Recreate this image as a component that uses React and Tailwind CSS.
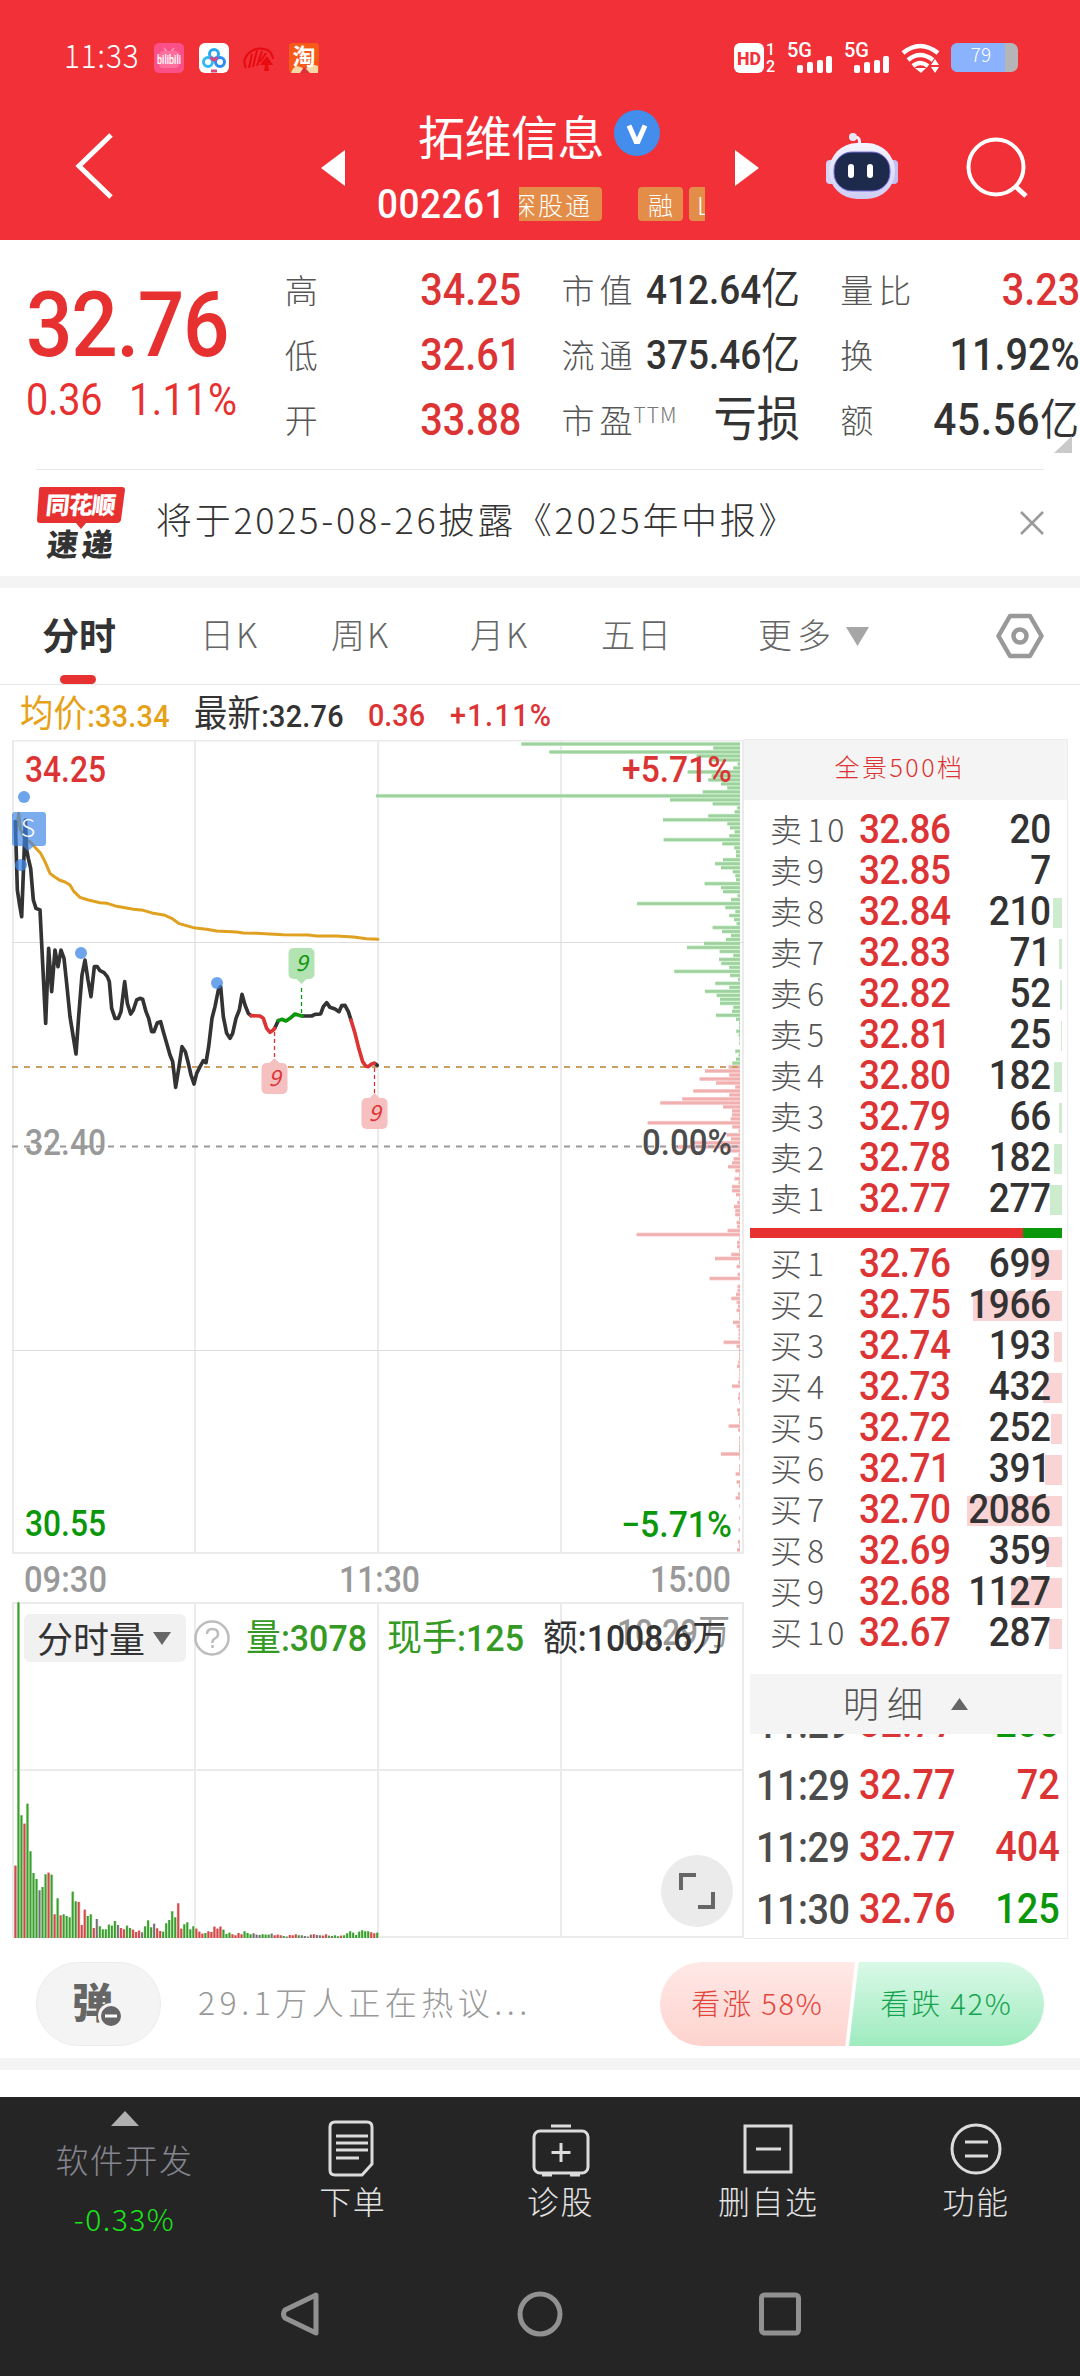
import { Fragment } from 'react'

const asks = [
  ['卖10', '32.86', 20, 0],
  ['卖9', '32.85', 7, 0],
  ['卖8', '32.84', 210, 9],
  ['卖7', '32.83', 71, 3],
  ['卖6', '32.82', 52, 2],
  ['卖5', '32.81', 25, 1],
  ['卖4', '32.80', 182, 8],
  ['卖3', '32.79', 66, 3],
  ['卖2', '32.78', 182, 8],
  ['卖1', '32.77', 277, 12],
]

const bids = [
  ['买1', '32.76', 699, 31],
  ['买2', '32.75', 1966, 89],
  ['买3', '32.74', 193, 8],
  ['买4', '32.73', 432, 19],
  ['买5', '32.72', 252, 11],
  ['买6', '32.71', 391, 17],
  ['买7', '32.70', 2086, 95],
  ['买8', '32.69', 359, 16],
  ['买9', '32.68', 1127, 51],
  ['买10', '32.67', 287, 13],
]

const trades = [
  ['11:29', '32.77', '200', 'text-[#0a970a]'],
  ['11:29', '32.77', '72', 'text-[#dc3434]'],
  ['11:29', '32.77', '404', 'text-[#dc3434]'],
  ['11:30', '32.76', '125', 'text-[#0a970a]'],
]

// Price path segments, three units per pixel
const priceLine = [
  ['#333333', '46,275 52,480 58,520 65,560 70,430 76,270 80,360 85,385 92,415 100,510 108,535 120,540 128,700 137,880 146,655 155,785 165,660 174,710 183,660 192,685 200,760 210,860 228,972 236,860 246,735 255,690 264,750 273,800 283,710 292,710 300,722 312,728 322,740 328,755 335,835 345,865 355,865 363,845 374,755 382,820 392,852 400,840 410,810 420,805 428,808 438,845 446,865 455,905 462,905 472,878 482,875 490,905 500,940 510,975 518,995 527,1072 537,1010 546,950 556,965 565,1000 573,1035 582,1062 590,1030 600,1010 610,992 618,998 626,950 636,865 645,830 655,780 662,770 670,860 680,910 690,925 698,910 708,865 718,840 726,793 735,825 745,850 753,857'],
  ['#333333', '824,895 835,872'],
  ['#333333', '906,858 935,858 945,853 962,852 970,830 980,818 990,832 1005,837 1017,845 1025,827 1035,826 1045,845 1053,870'],
  ['#333333', '1123,1000 1132,1006'],
  ['#dc3434', '753,857 780,858 790,865 800,895 810,907 820,900 824,895'],
  ['#0a970a', '835,872 845,868 858,873 870,865 885,852 895,855 906,858'],
  ['#dc3434', '1053,870 1065,910 1075,950 1088,995 1097,1008 1105,1010 1115,1002 1123,1000'],
]

const averageLine =
  '50,300 56,250 62,300 75,330 90,335 105,352 122,370 135,395 150,430 160,438 178,450 195,456 210,465 222,485 240,502 265,510 300,518 322,520 350,529 400,538 430,541 460,550 495,556 515,565 538,581 580,593 620,598 650,603 710,606 730,609 770,610 850,614 925,615 950,618 1010,618 1060,621 1100,626 1134,628'

// Volume at each price tick, from the top of the chart down
const depthAbove = [
  656, 80, 572, 130, 90, 7, 20, 157, 85, 95, 57, 38, 112, 1092, 210, 82, 8, 16, 95, 231, 38, 30, 16, 32, 229, 53, 17, 12,
  12, 51, 75, 57, 22, 14, 12, 106, 57, 51, 7, 27, 309, 44, 14, 32, 18, 10, 82, 54, 27, 42, 108, 159, 61, 20, 63, 56, 32,
  197, 30, 6, 74, 32, 105, 70, 60, 60, 20, 24, 72, 12, 3, 3, 11, 4, 2, 2, 0, 14, 4, 12, 23,
]
const depthBelow = [
  34, 105, 32, 121, 72, 14, 140, 32, 173, 239, 51, 24, 24, 28, 277, 23, 4, 40, 27, 140, 190, 40, 4, 19, 24, 36, 14, 2, 16,
  4, 24, 24, 12, 2, 8, 18, 14, 14, 3, 10, 8, 37, 310, 2, 9, 9, 3, 26, 75, 3, 10, 0, 7, 91, 0, 7, 7, 12, 26, 10, 6, 10, 3,
  3, 21, 10, 4, 4, 4, 49, 10, 3, 3, 3, 5, 9, 2, 2, 2, 5, 24, 0, 4, 6, 2, 0, 9, 6, 2, 3, 34, 6, 0, 3, 2, 3, 3, 57, 2, 0, 3,
  3, 13, 0, 10, 3, 0, 6, 13, 0, 2, 0, 0, 2, 0, 0, 4, 0, 0, 6, 3, 9,
]

// Minute volume: height and direction (r up, g down, k flat)
const volume =
  '217r 1007g 368g 343r 403g 260g 195g 177g 143k 153g 191g 196r 190g 71r 119g 68r 71g 66g 62g 139g 110g 108r 39r 85r 66g 71g 30r 57k 35g 26g 26g 40g 37g 51g 39k 30r 26r 37g 30g 25r 18r 22r 17k 35g 53g 32g 43k 29r 21r 19g 44g 54g 80g 62g 104r 28r 41g 47g 26g 35g 28r 19r 13r 15g 20r 18r 34r 28r 34r 25g 12g 16g 11r 8r 15r 11r 20g 15g 11g 14k 10k 9k 11g 10g 10g 13k 8r 10r 8r 6g 4k 9r 8r 11r 8g 8k 6k 4k 10k 11r 9k 8k 7r 11r 7g 6k 8g 5g 7r 8g 14g 20g 16g 9g 19g 23g 20g 20g 17r 14r 16g'.split(
    ' '
  )
const volumeColors = {
  r: ['#cf4a4a', '#f3b5b5'],
  g: ['#3d9a34', '#b4e8a8'],
  k: ['#707070', '#d5d5d5'],
}

const tabs = [
  ['日K', 'w-[131px]'],
  ['周K', 'w-[139px]'],
  ['月K', 'w-[131px]'],
  ['五日', 'w-[140px]'],
]

const HAND = "font-['Noto_Sans_CJK_SC',sans-serif] font-light"
const DIN = "font-[Roboto,'Noto_Sans_CJK_SC',sans-serif] font-medium"

function Num({ className = '', children }) {
  return <span className={`${DIN} inline-block whitespace-nowrap scale-x-90 ${className}`}>{children}</span>
}

function AppIcons() {
  return (
    <svg width="166" height="32" viewBox="0 0 166 32">
      <rect x="0" y="1" width="30" height="30" rx="5" fill="#fb4f87" />
      <path d="M10 6l3 4M20 6l-3 4" stroke="#ff8fb4" strokeWidth="2" />
      <rect x="5" y="9" width="20" height="17" rx="4" fill="#ff6f9e" />
      <text x="3" y="22" fontSize="12" fontWeight="500" fill="#fff" textLength="24" lengthAdjust="spacingAndGlyphs" fontFamily="Roboto">bilibili</text>
      <rect x="45" y="1" width="30" height="30" rx="6" fill="#fff" />
      <g fill="none" strokeWidth="3">
        <circle cx="60" cy="12" r="4.5" stroke="#2aa7f0" />
        <circle cx="54" cy="20" r="4.5" stroke="#35b9f4" />
        <circle cx="66" cy="20" r="4.5" stroke="#2c8df2" />
        <path d="M57 15q3 6 6 0" stroke="#e0457b" />
      </g>
      <path d="M57 29h6" stroke="#e0457b" strokeWidth="3" />
      <path d="M92 26q-4-8 2-14q6-7 16-5q8 1 9 10M95 26l3-14M99 25l4-17M103 24l5-15M106 20l6-9" fill="none" stroke="#e80b10" strokeWidth="2" />
      <path d="M113 14l6 9h-5l1 6h-5l1-6h-5z" fill="#e80b10" />
      <rect x="135" y="1" width="30" height="30" rx="4" fill="#f65a18" />
      <path d="M137 31q3-9 9-6l6 2q5-6 12-3v7z" fill="#f7d9a8" />
      <path d="M146 31l4-6 6 6z" fill="#d9323e" />
      <text x="150" y="23" fontSize="23" fontWeight="700" fill="#fff" textAnchor="middle" fontFamily="Noto Sans CJK SC">淘</text>
    </svg>
  )
}

function SignalIcons() {
  return (
    <svg width="290" height="36" viewBox="732 40 290 36" fill="#fff" fontFamily="Roboto">
      <rect x="734" y="43" width="30" height="30" rx="6" />
      <text x="749" y="65" fontSize="19" fontWeight="800" fill="#f13038" textAnchor="middle" textLength="24" lengthAdjust="spacingAndGlyphs">HD</text>
      <text x="766" y="55" fontSize="16" fontWeight="500">1</text>
      <text x="766" y="72" fontSize="16" fontWeight="500">2</text>
      {[0, 57].map((dx) => (
        <Fragment key={dx}>
          <text x={787 + dx} y="57" fontSize="20" fontWeight="500" textLength="25" lengthAdjust="spacingAndGlyphs">5G</text>
          <rect x={797 + dx} y="65" width="6" height="8" rx="2" />
          <rect x={807 + dx} y="62" width="6" height="11" rx="2" />
          <rect x={817 + dx} y="60" width="6" height="13" rx="2" />
          <rect x={826 + dx} y="56" width="6" height="17" rx="2" />
        </Fragment>
      ))}
      <g fill="none" stroke="#fff" strokeWidth="4.500">
        <path d="M903 53q17-14 35 0" />
        <path d="M908 60q12-10 25 0" />
        <path d="M913 66q7-6 15 0" />
      </g>
      <path d="M915 68h11l-5 5z" />
      <path d="M935 59l4 6h-8zM931 67h8l-4 6z" />
      <rect x="951" y="43" width="67" height="29" rx="7" fill="#b5b5b8" />
      <path d="M958 43h47v29h-47q-7 0-7-7v-15q0-7 7-7z" fill="#8ab2fd" />
      <text x="981" y="62" fontSize="19" fontWeight="300" textAnchor="middle" fontFamily="Noto Sans CJK SC">79</text>
    </svg>
  )
}

function Robot() {
  return (
    <svg width="74" height="68" viewBox="0 0 74 68">
      <defs>
        <linearGradient id="shell" x1="0" y1="0" x2="0" y2="1">
          <stop offset="0" stopColor="#f5f4ff" />
          <stop offset="1" stopColor="#cfcdf5" />
        </linearGradient>
      </defs>
      <path d="M34 13q2-7-3-8" fill="none" stroke="#f0eefc" strokeWidth="3" />
      <circle cx="28" cy="5" r="4" fill="#ece8fa" />
      <rect x="1" y="28" width="9" height="24" rx="4" fill="#d6d3f3" />
      <rect x="64" y="28" width="9" height="24" rx="4" fill="#c3c0f0" />
      <rect x="4" y="11" width="66" height="56" rx="28" fill="url(#shell)" />
      <rect x="9" y="20" width="56" height="39" rx="18" fill="#1d2a4c" stroke="#7a6fe0" strokeWidth="1" />
      <rect x="23" y="32" width="6" height="14" rx="3" fill="#fff" />
      <rect x="42" y="32" width="6" height="14" rx="3" fill="#fff" />
    </svg>
  )
}

function Header() {
  return (
    <header className="h-60 bg-[#f13038] text-white">
      <div className="flex h-[116px] items-center">
        <div className={`${HAND} ml-16 w-[90px]`}>
          <span className="-mt-1.5 inline-block origin-left scale-x-90 text-[33px] leading-none tracking-[1px]">11:33</span>
        </div>
        <AppIcons />
        <div className="ml-[412px]">
          <SignalIcons />
        </div>
      </div>
      <div className="flex h-[124px] items-start">
        <svg className="ml-[74px] mt-4" width="42" height="68" viewBox="0 0 42 68" fill="none" stroke="#fff" strokeWidth="5">
          <path d="M37 3L5 34l32 31" />
        </svg>
        <svg className="ml-[205px] mt-[34px]" width="24" height="36" viewBox="0 0 24 36" fill="#fff">
          <path d="M24 0v36L0 18z" />
        </svg>
        <div className="ml-8 w-[358px]">
          <div className="-mt-2 flex h-[52px] items-center pl-[41px]">
            <span className="font-['Noto_Sans_CJK_SC',sans-serif] text-[47px] leading-none tracking-[-0.5px]">拓维信息</span>
            <svg className="ml-[9px]" width="48" height="48" viewBox="0 0 48 48">
              <circle cx="24" cy="23" r="23" fill="#438eec" />
              <path d="M16 15.500l7 16h2l7-16" fill="none" stroke="#fff" strokeWidth="5" />
            </svg>
          </div>
          <div className="mt-[25px] flex h-[38px] items-center">
            <div className="w-[142px]">
              <Num className="origin-left text-[41px] leading-none tracking-[0.6px]">002261</Num>
            </div>
            <div className={`${HAND} flex h-[34px] w-[186px] items-center overflow-hidden text-[25px] leading-none`}>
              <div className="flex h-[34px] w-[83px] shrink-0 items-center justify-end rounded-r-sm bg-[#e38d48] pr-2.5 tracking-[2px]">
                <span className="shrink-0">深股通</span>
              </div>
              <div className="ml-9 flex h-[34px] w-[45px] shrink-0 items-center justify-center rounded-sm bg-[#e38d48]">融</div>
              <div className="ml-1.5 flex h-[34px] w-6 shrink-0 items-center rounded-l-sm bg-[#e38d48] pl-2">L</div>
            </div>
          </div>
        </div>
        <svg className="mt-[34px]" width="24" height="36" viewBox="0 0 24 36" fill="#fff">
          <path d="M0 0l24 18L0 36z" />
        </svg>
        <div className="ml-[66px] mt-4">
          <Robot />
        </div>
        <svg className="ml-[66px] mt-5" width="66" height="66" viewBox="0 0 66 66" fill="none" stroke="#fff" strokeWidth="4">
          <circle cx="31" cy="31" r="27.500" />
          <path d="M50 50l11 10" strokeWidth="5" />
        </svg>
      </div>
    </header>
  )
}

function Stat({ label, sup, value, valueClass }) {
  return (
    <div className="flex h-[65px] items-center justify-between">
      <span className={`${HAND} whitespace-nowrap text-[33px] leading-none tracking-[5px] text-[#555]`}>
        {label}
        {sup && <sup className="-ml-1 text-[21px] tracking-[1px] text-[#777]">{sup}</sup>}
      </span>
      <Num className={`origin-right leading-none ${valueClass}`}>{value}</Num>
    </div>
  )
}

const yi = <span className="text-[43px] font-normal">亿</span>

function Quote() {
  return (
    <section className="flex h-[229px] bg-white">
      <div className="w-[285px] pl-[26px] text-[#e73131]">
        <div className="mt-[40px] h-[90px]">
          <Num className="origin-left text-[91px] leading-[90px] tracking-[-1.5px]">32.76</Num>
        </div>
        <div className="mt-[6px] flex h-[48px] items-center">
          <div className="w-[103px]">
            <Num className="origin-left text-[44px] font-normal leading-none tracking-[-0.3px]">0.36</Num>
          </div>
          <Num className="origin-left text-[44px] font-normal leading-none tracking-[0.5px]">1.11%</Num>
        </div>
      </div>
      <div className="w-[237px] pt-[17px]">
        <Stat label="高" value="34.25" valueClass="text-[44px] text-[#dc3434]" />
        <Stat label="低" value="32.61" valueClass="text-[44px] text-[#dc3434]" />
        <Stat label="开" value="33.88" valueClass="text-[44px] text-[#dc3434]" />
      </div>
      <div className="ml-10 w-[239px] pt-[17px]">
        <Stat label="市值" value={<>412.64{yi}</>} valueClass="-ml-6 text-[41px] text-[#333]" />
        <Stat label="流通" value={<>375.46{yi}</>} valueClass="-ml-6 text-[41px] text-[#333]" />
        <Stat label="市盈" sup="TTM" value={<span className="font-normal">亏损</span>} valueClass="text-[48px] text-[#333]" />
      </div>
      <div className="relative ml-10 w-[240px] pt-[17px]">
        <Stat label="量比" value="3.23" valueClass="text-[44px] text-[#dc3434]" />
        <Stat label="换" value="11.92%" valueClass="text-[44px] text-[#333]" />
        <Stat label="额" value={<>45.56{yi}</>} valueClass="text-[45px] tracking-[0.8px] text-[#333]" />
        <svg className="absolute bottom-4 right-2" width="18" height="17" viewBox="0 0 18 17" fill="#c9c9c9">
          <path d="M18 0v17H0z" />
        </svg>
      </div>
    </section>
  )
}

function News() {
  return (
    <section className="bg-white">
      <div className="mx-9 h-px bg-[#e8e8e8]" />
      <div className="flex h-[106px] items-center">
        <svg className="ml-9" width="90" height="76" viewBox="0 0 90 76" fontFamily="Noto Sans CJK SC" fontWeight="900">
          <path d="M5 2h81q3 0 3 3l-4 30q-1 3-4 3H50l-5 6-5-6H4q-3 0-3-3L3 5q0-3 2-3z" fill="#e73131" />
          <text transform="translate(9 29) skewX(-6)" fontSize="24" fill="#fff" textLength="70">同花顺</text>
          <text transform="translate(10 71) skewX(-6)" fontSize="31" fill="#333" textLength="66">速递</text>
        </svg>
        <div className={`${HAND} -mt-2.5 ml-[30px] flex-1 whitespace-nowrap text-[36px] leading-none tracking-[2.7px] text-[#333]`}>
          将于2025-08-26披露《2025年中报》
        </div>
        <svg className="mr-9" width="24" height="24" viewBox="0 0 24 24" stroke="#999" strokeWidth="2.500">
          <path d="M1 1l22 22M23 1L1 23" />
        </svg>
      </div>
      <div className="h-3 bg-[#f4f4f4]" />
    </section>
  )
}

function Tabs() {
  return (
    <nav className="border-b border-[#e6e6e6] bg-white">
      <div className={`${HAND} flex h-24 items-center whitespace-nowrap text-[34px] leading-none text-[#666]`}>
        <div className="relative ml-[42px] flex h-full w-[158px] items-center pb-1 text-[37px] font-bold text-[#333]">
          分时
          <span className="absolute bottom-0 left-[18px] h-[9px] w-9 rounded-full bg-[#e73131]" />
        </div>
        {tabs.map(([label, width]) => (
          <div key={label} className={`${width} pb-1 tracking-[2px]`}>{label}</div>
        ))}
        <div className="ml-[17px] pb-1 tracking-[5px]">更多</div>
        <svg className="ml-2.5" width="23" height="19" viewBox="0 0 23 19" fill="#a6a6a6">
          <path d="M0 0h23L11.500 19z" />
        </svg>
        <svg className="ml-auto mr-9" width="48" height="46" viewBox="0 0 48 46" fill="none" stroke="#999" strokeWidth="4.500" strokeLinejoin="round">
          <path d="M14 3h20l11.500 20L34 43H14L2.500 23z" />
          <circle cx="24" cy="23" r="6.500" />
        </svg>
      </div>
    </nav>
  )
}

function PriceInfo() {
  return (
    <div className="flex h-[55px] items-center pt-1 text-[32px] leading-none text-[#dc3434]">
      <div className="ml-5 w-[174px] text-[#e6a117]">
        <Num className="origin-left tracking-[0.3px]"><span className="text-[37px] font-normal">均价</span>:33.34</Num>
      </div>
      <div className="w-[174px] text-[#333]">
        <Num className="origin-left tracking-[0.3px]"><span className="text-[37px] font-normal">最新</span>:32.76</Num>
      </div>
      <div className="w-[82px]"><Num className="origin-left">0.36</Num></div>
      <Num className="origin-left tracking-[1.5px]">+1.11%</Num>
    </div>
  )
}

// Text inside a chart, squeezed to the given width
function Label({ x, y, width, size = 36, fill, anchor, children, weight = 500 }) {
  return (
    <text x={x} y={y} fontSize={size} fontWeight={weight} fill={fill} textAnchor={anchor} textLength={width} lengthAdjust="spacingAndGlyphs" fontFamily="Roboto, Noto Sans CJK SC">
      {children}
    </text>
  )
}

function Flag({ x, y, up, line, color, bg }) {
  return (
    <g>
      <path d={line} stroke={color} strokeWidth="1.300" strokeDasharray="4 3" />
      <rect x={x - 13} y={y} width="26" height="31" rx="5" fill={bg} />
      <path d={up ? `M${x - 5} ${y}l5-5 5 5z` : `M${x - 5} ${y + 31}l5 5 5-5z`} fill={bg} />
      <text x={x} y={y + 23} fontSize="22" fill={color} textAnchor="middle" fontFamily="Noto Sans CJK SC" fontStyle="italic">9</text>
    </g>
  )
}

function DepthBars({ data, top, core, halo }) {
  return data.map((w, i) =>
    w ? (
      <g key={i}>
        <rect x={740 - w / 3} y={top + i * 3.99 - 2} width={w / 3} height="4" fill={halo} />
        <rect x={740 - w / 3} y={top + i * 3.99 - 1.3} width={w / 3} height="2.600" fill={core} />
      </g>
    ) : null
  )
}

function PriceChart() {
  return (
    <svg className="block" width="744" height="814" viewBox="0 740 744 814" fill="none">
      <g stroke="#ebebeb" strokeWidth="2">
        <path d="M12 740.500H744M13 740V1554M195 740V1554M378 740V1554M561 740V1554M743 740V1554M12 1553H744" />
        <path d="M12 942.500H744M12 1350.500H744" strokeWidth="1" stroke="#dedede" />
      </g>
      <DepthBars data={depthAbove} top={744} core="#9fd09f" halo="#c6efc6" />
      <DepthBars data={depthBelow} top={1067} core="#f1b0b0" halo="#fad2d2" />
      <path d="M12 1067H740" stroke="#c9a063" strokeWidth="2" strokeDasharray="6 6" />
      <path d="M12 1146.500H740" stroke="#999" strokeWidth="2" strokeDasharray="6 6" />
      <g transform="translate(0 730) scale(.33333)" strokeLinejoin="round" strokeLinecap="round">
        <polyline points={averageLine} stroke="#e0a020" strokeWidth="9" />
        {priceLine.map(([color, points]) => (
          <polyline key={points} points={points} stroke={color} strokeWidth="11" />
        ))}
      </g>
      <g fill="#3c86e6" fillOpacity=".75">
        <circle cx="24" cy="797" r="6" />
        <circle cx="21" cy="865" r="6" />
        <circle cx="81" cy="953" r="6" />
        <circle cx="217" cy="983" r="6" />
      </g>
      <path d="M15 812h28q3 0 3 3v28q0 3-3 3h-9l-6 5-5-5h-8q-3 0-3-3v-28q0-3 3-3z" fill="#3c86e6" fillOpacity=".68" />
      <text x="28" y="837" fontSize="25" fill="#fff" textAnchor="middle" fontFamily="Noto Sans CJK SC" fontWeight="300">S</text>
      <Flag x={301.500} y={948} line="M301.500 988V1015" color="#0a970a" bg="#b3e2b3" />
      <Flag x={274.500} y={1063} up line="M274.500 1032V1058" color="#dc3434" bg="#f6c0c0" />
      <Flag x={374.500} y={1098} up line="M374.500 1068V1093" color="#dc3434" bg="#f6c0c0" />
      <Label x={25} y={782} width={81} fill="#dc3434">34.25</Label>
      <Label x={622} y={782} width={110} fill="#dc3434">+5.71%</Label>
      <Label x={25} y={1155} width={81} fill="#999">32.40</Label>
      <Label x={642} y={1155} width={90} fill="#4c4c4c">0.00%</Label>
      <Label x={25} y={1536} width={81} fill="#0a970a">30.55</Label>
      <Label x={621} y={1537} width={111} fill="#0a970a">−5.71%</Label>
    </svg>
  )
}

function VolumeChart() {
  return (
    <div className="relative h-[336px]">
      <svg className="block" width="744" height="336" viewBox="0 1602 744 336" fill="none">
        <g stroke="#ebebeb" strokeWidth="2">
          <path d="M12 1603H744M13 1602V1938M195 1602V1938M378 1602V1938M561 1602V1938M743 1602V1938M12 1770H744M12 1937H744" />
        </g>
        {volume.map((item, i) => {
          const h = parseInt(item) / 3
          const [core, halo] = volumeColors[item.slice(-1)]
          return (
            <g key={i}>
              <rect x={14 + i * 3.015} y={1938 - h} width="3" height={h} fill={halo} />
              <rect x={14.5 + i * 3.015} y={1938 - h} width="1.800" height={h} fill={core} />
            </g>
          )
        })}
        <Label x={617} y={1645} width={113} size={36} fill="#999">10.29<tspan fontWeight="400">万</tspan></Label>
      </svg>
      <div className="absolute left-6 top-3 flex h-12 items-center">
        <div className="flex h-12 w-[162px] items-center rounded-md bg-[#f1f1f1] pl-[13px]">
          <span className="font-['Noto_Sans_CJK_SC',sans-serif] -mt-0.5 text-[36px] leading-none text-[#333]">分时量</span>
          <svg className="ml-[8px]" width="18" height="13" viewBox="0 0 18 13" fill="#666">
            <path d="M0 0h18L9 13z" />
          </svg>
        </div>
        <svg className="ml-2" width="36" height="36" viewBox="0 0 36 36" fill="none" stroke="#bdbdbd" strokeWidth="2.500">
          <circle cx="18" cy="18" r="16.500" />
          <path d="M13 14q0-5 5.500-5t5.500 5q0 3-3 4.500t-2.500 4.500" />
          <path d="M18.500 25v3" />
        </svg>
        <svg width="500" height="48" viewBox="230 1614 500 48">
          <Label x={246} y={1651} width={121} fill="#359a24"><tspan fontSize="37" fontWeight="400">量</tspan>:3078</Label>
          <Label x={387} y={1651} width={137} fill="#359a24"><tspan fontSize="37" fontWeight="400">现手</tspan>:125</Label>
          <Label x={543} y={1651} width={183} fill="#333"><tspan fontSize="37" fontWeight="400">额</tspan>:1008.6<tspan fontWeight="400">万</tspan></Label>
        </svg>
      </div>
      <div className="absolute bottom-[11px] right-[11px] flex h-[72px] w-[72px] items-center justify-center rounded-full bg-[#ebebeb]">
        <svg width="38" height="38" viewBox="0 0 38 38" fill="none" stroke="#666" strokeWidth="4">
          <path d="M3 18V3h15M35 20v15H20" />
        </svg>
      </div>
    </div>
  )
}

function Level({ row, bar }) {
  const [label, price, amount, width] = row
  return (
    <div className="relative flex h-[41px] items-center">
      <span className={`absolute right-0 top-[7px] h-[30px] ${bar}`} style={{ width }} />
      <span className={`${HAND} -mt-1 ml-[20px] w-[89px] text-[32px] leading-none text-[#555]`}>
        {label[0]}
        <span className="ml-[5px] tracking-[3px]">{label.slice(1)}</span>
      </span>
      <Num className="origin-left text-[41px] leading-none tracking-[-0.6px] text-[#dc3434]">{price}</Num>
      <Num className="absolute right-[11px] origin-right text-[41px] leading-none tracking-[-0.4px] text-[#333]">{amount}</Num>
    </div>
  )
}

function OrderBook() {
  return (
    <aside className="-mt-px h-[1200px] w-[324px] border border-l-0 border-[#ebebeb] bg-white">
      <div className={`${HAND} flex h-[60px] items-center justify-center bg-[#f4f4f4] pb-1.5 pr-3 text-[25px] tracking-[2.5px] text-[#dc3434]`}>全景500档</div>
      <div className="ml-1.5 w-[312px]">
        <div className="pt-[9px]">
          {asks.map((row) => <Level key={row[0]} row={row} bar="bg-[#cdebcd]" />)}
        </div>
        <div className="mb-[5px] mt-[9px] flex h-2.5">
          <div className="w-[273px] bg-[#e73131]" />
          <div className="flex-1 bg-[#0a970a]" />
        </div>
        {bids.map((row) => <Level key={row[0]} row={row} bar="bg-[#fad4d4]" />)}
        <div className={`${HAND} mt-[21px] flex h-[60px] items-center bg-[#f4f4f4] pb-1 pl-[93px] text-[36px] tracking-[8px] text-[#555]`}>
          明细
          <svg className="ml-5 mt-1" width="17" height="12" viewBox="0 0 17 12" fill="#666">
            <path d="M0 12L8.500 0 17 12z" />
          </svg>
        </div>
        <div className="flex h-[206px] flex-col justify-end overflow-hidden">
          {trades.map(([time, price, amount, color], i) => (
            <div key={i} className="relative flex h-[62px] shrink-0 items-center text-[42px] leading-none">
              <div className="w-[109px] pl-1.5">
                <Num className="origin-left tracking-[-0.5px] text-[#4c4c4c]">{time}</Num>
              </div>
              <Num className="origin-left text-[#dc3434]">{price}</Num>
              <Num className={`absolute right-[2px] origin-right ${color}`}>{amount}</Num>
            </div>
          ))}
        </div>
      </div>
    </aside>
  )
}

function Discuss() {
  return (
    <section className={`${HAND} flex h-[120px] items-center bg-white pt-3 leading-none`}>
      <div className="relative ml-9 flex h-[84px] w-[125px] items-center justify-center rounded-full border border-[#ececec] bg-[#f4f4f4] text-[41px] font-black text-[#666]">
        <span className="-ml-3 -mt-2">弹</span>
        <svg className="absolute left-[61px] top-[40px]" width="26" height="26" viewBox="0 0 26 26">
          <circle cx="13" cy="13" r="11.500" fill="#666" stroke="#f4f4f4" strokeWidth="3" />
          <path d="M7 13h12" stroke="#fff" strokeWidth="3" />
        </svg>
      </div>
      <div className="-mt-1.5 ml-[37px] w-[462px] whitespace-nowrap text-[32px] tracking-[4.5px] text-[#999]">29.1万人正在热议...</div>
      <div className="flex text-[29px] tracking-[1.8px]">
        <div className="flex h-[84px] w-[195px] items-center justify-center whitespace-nowrap rounded-l-full bg-gradient-to-b from-[#ffe9e7] to-[#fed3ce] pb-1 text-[#e4453a] [clip-path:polygon(0_0,100%_0,95%_100%,0_100%)]">看涨 58%</div>
        <div className="-ml-[6px] flex h-[84px] w-[195px] items-center justify-center whitespace-nowrap rounded-r-full bg-gradient-to-b from-[#d9f9e7] to-[#9eebbf] pb-1 text-[#16a34f] [clip-path:polygon(5%_0,100%_0,100%_100%,0_100%)]">看跌 42%</div>
      </div>
    </section>
  )
}

const actions = [
  {
    label: '下单',
    icon: (
      <>
        <path d="M6 1h32q5 0 5 5v37l-10 11H6q-5 0-5-5V6q0-5 5-5z" />
        <path d="M7 15h32M7 22h32M7 29h32M7 37h23" />
      </>
    ),
  },
  {
    label: '诊股',
    icon: (
      <>
        <rect x="-3" y="10" width="54" height="42" rx="6" />
        <path d="M14 5h20M24 22v19M14.500 31.500h19M5 54h10M33 54h10" />
      </>
    ),
  },
  {
    label: '删自选',
    icon: (
      <>
        <rect x="1" y="5" width="46" height="46" />
        <path d="M12 28h25" />
      </>
    ),
  },
  {
    label: '功能',
    icon: (
      <>
        <circle cx="24" cy="28" r="24" />
        <path d="M13 21h23M13 35h23" />
      </>
    ),
  },
]

function BottomBar() {
  return (
    <footer className={`${HAND} h-[279px] bg-[#252525] leading-none`}>
      <div className="flex h-[154px]">
        <div className="flex w-[249px] flex-col items-center pt-3.5">
          <svg width="28" height="15" viewBox="0 0 28 15" fill="#b0b0b0">
            <path d="M14 0l14 15H0z" />
          </svg>
          <div className="mt-[17px] text-[33px] tracking-[1.5px] text-[#85858f]">软件开发</div>
          <div className="mt-[27px] text-[30px] tracking-[1.5px] text-[#19e619]">-0.33%</div>
        </div>
        {actions.map(({ label, icon }) => (
          <div key={label} className="flex w-[207.700px] flex-col items-center pt-6">
            <svg className="overflow-visible" width="48" height="56" viewBox="0 0 48 56" fill="none" stroke="#dcdcdc" strokeWidth="3">
              {icon}
            </svg>
            <div className="mt-[7px] text-[32px] tracking-[1.5px] text-[#e3e3e3]">{label}</div>
          </div>
        ))}
      </div>
      <div className="flex justify-center pt-10">
        <svg width="524" height="46" viewBox="278 2290 524 46" fill="none" stroke="#919191" strokeWidth="5" strokeLinejoin="round">
          <path d="M316 2294v38l-31-15q-3-4 0-8z" />
          <circle cx="540" cy="2313" r="20" />
          <rect x="761.500" y="2294" width="37" height="38" rx="3" />
        </svg>
      </div>
    </footer>
  )
}

export default function App() {
  return (
    <div className="h-[2376px] w-[1080px] overflow-hidden bg-white">
      <Header />
      <Quote />
      <News />
      <Tabs />
      <PriceInfo />
      <main className="flex h-[1198px]">
        <div className="w-[744px]">
          <PriceChart />
          <svg className="block" width="744" height="48" viewBox="0 1554 744 48">
            <Label x={24} y={1592} width={83} fill="#999">09:30</Label>
            <Label x={339} y={1592} width={81} fill="#999">11:30</Label>
            <Label x={650} y={1592} width={81} fill="#999">15:00</Label>
          </svg>
          <VolumeChart />
        </div>
        <OrderBook />
      </main>
      <Discuss />
      <div className="h-3 bg-[#f4f4f4]" />
      <div className="h-[27px] bg-white" />
      <BottomBar />
    </div>
  )
}
